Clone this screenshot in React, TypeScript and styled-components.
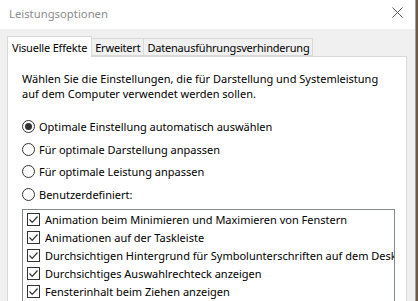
import * as React from 'react';
import styled, { createGlobalStyle } from 'styled-components';

const FONT = `'Noto Sans', 'Liberation Sans', sans-serif`;

const effects = [
  'Animation beim Minimieren und Maximieren von Fenstern',
  'Animationen auf der Taskleiste',
  'Durchsichtigen Hintergrund für Symbolunterschriften auf dem Desktop',
  'Durchsichtiges Auswahlrechteck anzeigen',
  'Fensterinhalt beim Ziehen anzeigen',
  'Fenster und Schaltflächen visuelle Stile zuweisen',
];

const options = [
  'Optimale Einstellung automatisch auswählen',
  'Für optimale Darstellung anpassen',
  'Für optimale Leistung anpassen',
  'Benutzerdefiniert:',
];

const tabs = ['Visuelle Effekte', 'Erweitert', 'Datenausführungsverhinderung'];

const App = () => {
  const [selected, setSelected] = React.useState(0);

  return (
    <>
      <GlobalStyle />
      <Window>
        <TitleBar>
          <Title>Leistungsoptionen</Title>
          <Close>
            <svg width="11" height="11" viewBox="0 0 11 11">
              <path d="M0.5 0.5 L10.5 10.5 M10.5 0.5 L0.5 10.5" stroke="#555" strokeWidth="1" />
            </svg>
          </Close>
        </TitleBar>
        <Body>
          <TabRow>
            {tabs.map((t, i) => (
              <Tab key={t} active={i === 0}>
                {t}
              </Tab>
            ))}
          </TabRow>
          <Panel>
            <Intro>
              Wählen Sie die Einstellungen, die für Darstellung und Systemleistung
              <br />
              auf dem Computer verwendet werden sollen.
            </Intro>
            <RadioGroup>
              {options.map((o, i) => (
                <RadioRow key={o} onClick={() => setSelected(i)}>
                  <Radio checked={i === selected} />
                  {o}
                </RadioRow>
              ))}
            </RadioGroup>
            <ListBox>
              {effects.map((e) => (
                <CheckRow key={e}>
                  <CheckBox>
                    <svg width="11" height="11" viewBox="0 0 11 11">
                      <path d="M1.5 5.5 L4.2 8.3 L9.5 2.5" fill="none" stroke="#333" strokeWidth="1.2" />
                    </svg>
                  </CheckBox>
                  <span>{e}</span>
                </CheckRow>
              ))}
            </ListBox>
          </Panel>
        </Body>
      </Window>
    </>
  );
};

const GlobalStyle = createGlobalStyle`
  body {
    margin: 0;
    background: #6f5a48;
  }
`;

const Window = styled.div`
  width: 415px;
  height: 301px;
  overflow: hidden;
  background: #f0f0f0;
  border-right: 1px solid #a0a0a0;
  font-family: ${FONT};
  font-size: 11px;
  color: #000;
`;

const TitleBar = styled.div`
  height: 29px;
  background: #fff;
  display: flex;
  align-items: center;
  justify-content: space-between;
  padding: 0 12px 2px 9px;
  box-sizing: border-box;
`;

const Title = styled.span`
  color: #8c8c8c;
  font-size: 11.3px;
`;

const Close = styled.span`
  display: flex;
  margin-top: -3px;
`;

const Body = styled.div`
  padding: 7px 8px 0 7px;
`;

const TabRow = styled.div`
  display: flex;
  align-items: flex-end;
  height: 20px;
  position: relative;
  z-index: 1;
`;

const Tab = styled.div<{ active?: boolean }>`
  height: ${(p) => (p.active ? 21 : 18)}px;
  margin-bottom: ${(p) => (p.active ? -1 : 0)}px;
  padding: 0 ${(p) => (p.active ? 4 : 3)}px 0 ${(p) => (p.active ? 4 : 3)}px;
  background: ${(p) => (p.active ? '#fff' : '#f0f0f0')};
  border: 1px solid #d9d9d9;
  border-bottom: ${(p) => (p.active ? 'none' : '1px solid #d9d9d9')};
  border-left: ${(p) => (p.active ? '1px solid #d9d9d9' : 'none')};
  box-sizing: border-box;
  display: flex;
  align-items: center;
  white-space: nowrap;
  letter-spacing: -0.2px;
`;

const Panel = styled.div`
  background: #fff;
  border: 1px solid #d9d9d9;
  height: 260px;
  padding: 14px 11px 0 14px;
  box-sizing: border-box;
`;

const Intro = styled.p`
  margin: 0;
  line-height: 15px;
  white-space: nowrap;
`;

const RadioGroup = styled.div`
  margin-top: 14px;
  display: flex;
  flex-direction: column;
`;

const RadioRow = styled.label`
  display: flex;
  align-items: center;
  gap: 4px;
  height: 22.7px;
  white-space: nowrap;
  cursor: default;
`;

const Radio = styled.span<{ checked?: boolean }>`
  width: 13px;
  height: 13px;
  border: 1px solid #333;
  border-radius: 50%;
  box-sizing: border-box;
  background: #fff;
  display: flex;
  align-items: center;
  justify-content: center;
  flex: none;

  &::after {
    content: '';
    width: 7px;
    height: 7px;
    border-radius: 50%;
    background: ${(p) => (p.checked ? '#333' : 'transparent')};
  }
`;

const ListBox = styled.div`
  margin-top: 3px;
  border: 1px solid #828790;
  padding: 1px 0 0 4px;
  overflow: hidden;
  white-space: nowrap;
`;

const CheckRow = styled.div`
  display: flex;
  align-items: center;
  gap: 5px;
  height: 18px;
`;

const CheckBox = styled.span`
  width: 13px;
  height: 13px;
  border: 1px solid #333;
  box-sizing: border-box;
  background: #fff;
  display: flex;
  align-items: center;
  justify-content: center;
  flex: none;
`;

export default App;
